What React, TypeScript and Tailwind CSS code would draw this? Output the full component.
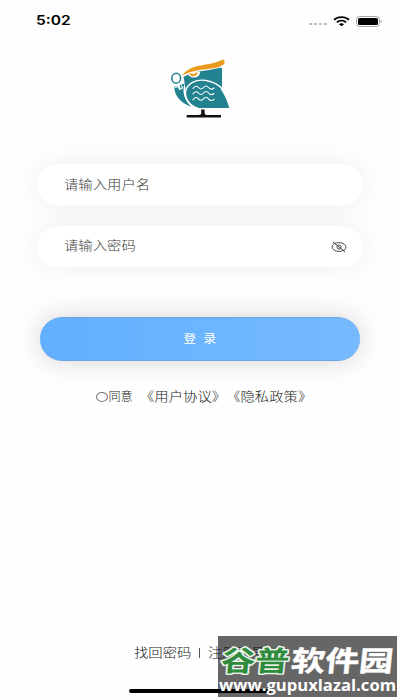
import { useState } from "react";

function Logo() {
  return (
    <svg width="60" height="62" viewBox="0 0 60 62" fill="none" aria-label="logo" className="overflow-visible">
      {/* head and body */}
      <path d="M13.5 17 C20 13 30 11 39 10 L51 7.5 L52 8.5 V28 L40 38 L20 38 C16 32 15 27 14.5 22Z" fill="#228290" />
      {/* back wing */}
      <path d="M4.2 27 L14.5 23.5 C12 32 14 40 21.5 46.8 C11 43.5 4.5 36 4.2 27Z" fill="#228290" />
      {/* front wing */}
      <path
        d="M28 48.1 C19 45.5 15.2 38.5 15.8 31.5 C17 23.5 26 18.9 36 20.7 C49 22.8 55 33 59.3 48.1Z"
        fill="#228290"
      />
      <path
        d="M28 48.3 C19 45.5 15 38.5 15.6 31.5 C17 23.5 26 18.9 36 20.5 C43 21.7 49 25 53 29.5"
        stroke="#fff"
        strokeWidth="1.3"
      />
      {/* eye */}
      <path d="M17.5 13.5 L30 11.5 C30 16.5 26.5 18 23 17.5 C20 17 18.3 15.5 17.5 13.5Z" fill="#fff" />
      <path d="M19 13.8 C20.5 17.4 27 16.8 28 12.5Z" fill="#e99a1c" />
      <path d="M21.5 13 C22.5 14.6 25 14.4 25.8 12.2Z" fill="#fff" />
      {/* cap brim */}
      <path
        d="M11.8 15.8 C16 10.5 21 7.4 28 6 C39 3.8 47 2.6 53 -0.6 C55.4 1 55 3 53.5 4.6 C47 9.4 37 8.8 27 10.4 C20.5 11.5 16 13.3 11.8 15.8Z"
        fill="#e99a1c"
      />
      {/* magnifier */}
      <ellipse cx="6.2" cy="18.2" rx="5" ry="5.6" fill="#fff" stroke="#fff" strokeWidth="2.4" />
      <ellipse cx="6.2" cy="18.2" rx="4.4" ry="5" fill="#fff" stroke="#228290" strokeWidth="1.6" />
      <path d="M8.2 23.5 L10 29" stroke="#fff" strokeWidth="1.6" />
      <path d="M5 27.5 L8.5 26.5 L9.5 29.5 L12.5 28 L11.5 25.5" stroke="#fff" strokeWidth="1.1" />
      <g stroke="#fff" strokeWidth="1.1" strokeLinecap="round">
        <path d="M23 28.5 Q26 24.5 28.5 27.5 T33.5 27.5 Q36 24.5 38.5 27.5 T44 28" />
        <path d="M23 34 Q26 30 28.5 33 T33.5 33 Q36 30 38.5 33 T44 33.5" />
        <path d="M23 39.8 Q26 35.8 28.5 38.8 T33.5 38.8 Q36 35.8 38.5 38.8 T44 39.3" />
      </g>
      <path
        d="M31.2 49.5 H34.6 V53 C34.8 54.3 35.5 55 37 55 H51 V57.5 H16.7 V55 H28.5 C30.5 55 31.2 54.3 31.2 53Z"
        fill="#16100f"
      />
    </svg>
  );
}

function StatusBar() {
  return (
    <div className="flex h-[42px] shrink-0 items-center pl-9 pr-[18px]">
      <span className="inline-block origin-left scale-x-[1.24] font-['Inter',sans-serif] text-[12.5px] font-semibold leading-none text-black">
        5:02
      </span>
      <div className="ml-auto flex items-center">
        <div className="mr-1.5 mt-1.5 flex gap-[2px]">
          {[0, 1, 2, 3].map((i) => (
            <span key={i} className="h-[2px] w-[3px] bg-[#bcbcbc]" />
          ))}
        </div>
        <svg width="17" height="11" viewBox="0 0 17 11" fill="none" stroke="#000" className="mr-1.5">
          <path d="M1 3.8 C5 0.2 12 0.2 16 3.8" strokeWidth="1.9" />
          <path d="M3.8 6.3 C6.5 4 10.5 4 13.2 6.3" strokeWidth="1.7" />
          <path d="M5.9 8.2 C7.5 6.9 9.5 6.9 11.1 8.2 L8.5 10.3Z" fill="#000" stroke="none" />
        </svg>
        <svg width="26" height="11" viewBox="0 0 26 11">
          <rect x="0.5" y="0.5" width="23" height="10" rx="3" fill="#fff" stroke="#a2a2a2" />
          <rect x="2" y="2" width="20" height="7" rx="1.5" fill="#000" />
          <path d="M24.8 4 C25.8 4.5 25.8 6.5 24.8 7Z" fill="#666" />
        </svg>
      </div>
    </div>
  );
}

function EyeOff() {
  return (
    <svg width="16" height="12" viewBox="0 0 16 12" fill="none" stroke="#3c3c3c" strokeWidth="0.9">
      <ellipse cx="8" cy="6" rx="7" ry="4.4" />
      <circle cx="8" cy="6" r="2.1" />
      <path d="M2 1 L14.2 11" strokeWidth="1" />
    </svg>
  );
}

function Watermark() {
  return (
    <div className="absolute left-[218px] top-[636px] h-[61px] w-[179px] overflow-hidden bg-black/60">
      <svg width="179" height="61" viewBox="0 0 179 61">
        <g fontFamily="'Noto Sans CJK SC', sans-serif" fontWeight="700" fontSize="28" strokeLinejoin="round">
          <text
            x="0"
            y="35"
            textLength="68"
            lengthAdjust="spacingAndGlyphs"
            transform="translate(6 0) skewX(-6)"
            fill="#2f8b3c"
            stroke="#e9f3e9"
            strokeWidth="3"
            paintOrder="stroke"
          >
            谷普
          </text>
          <text
            x="0"
            y="35"
            textLength="102"
            lengthAdjust="spacingAndGlyphs"
            transform="translate(76 0) skewX(-6)"
            fill="#fff"
            stroke="#fff"
            strokeWidth="0.5"
          >
            软件园
          </text>
        </g>
        <text
          x="1"
          y="55"
          textLength="177"
          lengthAdjust="spacingAndGlyphs"
          fontFamily="'Open Sans', 'Noto Sans', sans-serif"
          fontWeight="700"
          fontSize="16"
          fill="#fff"
        >
          www.gupuxlazal.com
        </text>
      </svg>
    </div>
  );
}

export default function App() {
  const [username, setUsername] = useState("");
  const [password, setPassword] = useState("");
  const [visible, setVisible] = useState(false);
  const [agreed, setAgreed] = useState(false);

  return (
    <div className="relative flex h-[700px] w-[400px] flex-col overflow-hidden bg-[#fefefe] font-['Liberation_Sans','Noto_Sans_CJK_SC',sans-serif] font-light text-[#222]">
      <StatusBar />

      <div className="flex h-[122px] shrink-0 justify-center pt-[18px]">
        <Logo />
      </div>

      {/* Login form */}
      <div className="flex flex-col gap-5 px-[37px]">
        <div className="flex h-[42px] items-center rounded-full bg-white px-[27px] shadow-[0_0_24px_rgba(70,110,140,0.10)]">
          <input
            type="text"
            placeholder="请输入用户名"
            aria-label="请输入用户名"
            value={username}
            onChange={(e) => setUsername(e.target.value)}
            className="w-[200px] origin-left scale-x-[1.14] bg-transparent text-[12.6px] outline-none placeholder:text-[#3c3c3c]"
          />
        </div>
        <div className="flex h-[41px] items-center justify-between rounded-full bg-white pl-[27px] pr-4 shadow-[0_0_24px_rgba(70,110,140,0.10)]">
          <input
            type={visible ? "text" : "password"}
            placeholder="请输入密码"
            aria-label="请输入密码"
            value={password}
            onChange={(e) => setPassword(e.target.value)}
            className="w-[200px] origin-left scale-x-[1.14] bg-transparent text-[12.6px] outline-none placeholder:text-[#3c3c3c]"
          />
          <button onClick={() => setVisible(!visible)} aria-label="toggle">
            <EyeOff />
          </button>
        </div>
      </div>

      <button className="mx-10 mt-[50px] flex h-11 shrink-0 items-center justify-center rounded-full border-y border-[#6aa5e2] bg-linear-to-r from-[#62afff] to-[#75baff] pt-0.5 text-white shadow-[0_0_26px_rgba(0,0,0,0.17)]">
        <span className="inline-block scale-x-[1.12] text-[11.5px] font-normal">登 &nbsp;录</span>
      </button>

      {/* Agreement */}
      <div className="mt-[26px] flex h-5 items-center pl-[95.5px] whitespace-nowrap">
        <button
          onClick={() => setAgreed(!agreed)}
          aria-label="同意"
          className={`mr-px h-[10px] w-[12px] shrink-0 rounded-[50%] border border-[#777] ${agreed ? "bg-[#62afff]" : ""}`}
        />
        <span className="w-[31px] shrink-0 text-[12px]">同意</span>
        <span className="inline-block origin-left scale-x-[1.14] text-[12.6px] [font-kerning:none] [text-spacing-trim:space-all]">
          《用户协议》《隐私政策》
        </span>
      </div>

      <div className="mt-auto flex h-5 shrink-0 items-center pl-[134px] whitespace-nowrap text-[12.6px]">
        <span className="w-[65px]">
          <span className="inline-block origin-left scale-x-[1.14]">找回密码</span>
        </span>
        <span className="h-[10px] w-px bg-[#555]" />
        <span className="ml-2 inline-block origin-left scale-x-[1.14]">注册账号</span>
      </div>
      <div className="mb-[7px] ml-[129px] mt-[26px] h-1 w-[142px] shrink-0 rounded-full bg-black" />

      <Watermark />
    </div>
  );
}
